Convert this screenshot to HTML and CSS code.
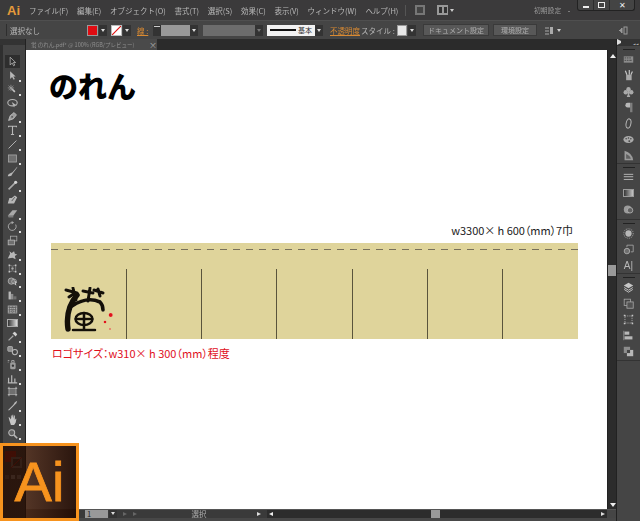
FILE: index.html
```html
<!DOCTYPE html>
<html lang="ja">
<head>
<meta charset="utf-8">
<title>Illustrator</title>
<link rel="stylesheet" href="styles.css">
</head>
<body>
<div class="app">
  <header class="menubar">
    <span class="ai-mark">Ai</span>
    <nav class="menu">
      <span>ファイル(F)</span><span>編集(E)</span><span>オブジェクト(O)</span><span>書式(T)</span><span>選択(S)</span><span>効果(C)</span><span>表示(V)</span><span>ウィンドウ(W)</span><span>ヘルプ(H)</span>
    </nav>
    <i class="vsep"></i>
    <span class="mini-box"><i></i></span>
    <span class="mini-grid"><i></i><i></i></span><i class="tri"></i>
    <span class="workspace">初期設定</span><i class="tri small"></i>
    <div class="winbtns">
      <span><i class="min"></i></span><span><i class="max"></i></span><span class="close">✕</span>
    </div>
  </header>

  <div class="control">
    <i class="grip"></i>
    <span class="label sel">選択なし</span>
    <span class="swatch red"></span><i class="dd"></i>
    <span class="swatch none"><svg viewBox="0 0 11 11"><path d="M0 11 11 0" stroke="#e01010" stroke-width="1.4"/></svg></span><i class="dd"></i>
    <span class="label orange stroke-l">線 :</span>
    <span class="stepper"></span><span class="combo c-weight"></span><i class="dd"></i>
    <span class="combo c-var"></span><i class="dd dim"></i>
    <span class="brush"><i></i><b>基本</b></span><i class="dd"></i>
    <span class="label orange opacity">不透明度</span>
    <span class="label style">スタイル :</span>
    <span class="swatch pale"></span><i class="dd"></i>
    <span class="btn b-doc">ドキュメント設定</span>
    <span class="btn b-env">環境設定</span>
    <svg class="arr-ico" viewBox="0 0 10 9"><path d="M1 2h4M1 5h4M1 8h4" stroke="#aaa"/><rect x="6" y="1" width="3" height="7" fill="#aaa"/></svg><i class="tri"></i>
    <svg class="end-ico" viewBox="0 0 9 9"><path d="M0 4.500h3M3 2v5l-2-2.500z" stroke="#999" fill="#999"/><rect x="5" y="1" width="3" height="7" fill="none" stroke="#999"/></svg>
  </div>

  <div class="workspace-area">
    <aside class="tools">
      <div class="grip-row"></div>
      <div class="toolgrid">
        <span class="tool on"><svg viewBox="0 0 14 14"><path d="M4 1.500v10l2.500-2.500 2 3.500 1.500-1-2-3.200h3z" fill="none" stroke="#ccc"/></svg></span>
        <span class="tool"><svg viewBox="0 0 14 14"><path d="M4 1.500v10l2.500-2.500 2 3.500 1.500-1-2-3.200h3z" fill="#ccc"/></svg></span>
        <span class="tool"><svg viewBox="0 0 14 14"><path d="M10 10 6 6" stroke="#ddd" stroke-width="2"/><path d="M5 1v8M1 5h8M2 2l6 6M8 2 2 8" stroke="#bbb" stroke-width=".8"/></svg></span>
        <span class="tool"><svg viewBox="0 0 14 14"><ellipse cx="7" cy="6" rx="6" ry="4" fill="none" stroke="#ccc" stroke-width="1.400"/><path d="M6 5l3 7 1-3 3 1z" fill="#ccc"/></svg></span>
        <span class="tool"><svg viewBox="0 0 14 14"><path d="M2 12 4 6l5-4 3 3-4 5z" fill="#aaa" stroke="#ddd"/><circle cx="6.500" cy="7.500" r="1" fill="#444"/></svg></span>
        <span class="tool"><svg viewBox="0 0 14 14"><path d="M2 3V1.500h10V3M7 1.500V12M5 12h4" fill="none" stroke="#ccc" stroke-width="1.400"/></svg></span>
        <span class="tool"><svg viewBox="0 0 14 14"><path d="M2 12 12 2" stroke="#ccc" stroke-width="1.200"/></svg></span>
        <span class="tool"><svg viewBox="0 0 14 14"><rect x="2" y="2.500" width="10" height="9" fill="#777" stroke="#bbb"/></svg></span>
        <span class="tool"><svg viewBox="0 0 14 14"><path d="M13 1 7 8 3 10q-2 1-2 3 5 1 6-3l6-8z" fill="#ccc"/></svg></span>
        <span class="tool"><svg viewBox="0 0 14 14"><path d="M2 12 10 4" stroke="#bbb" stroke-width="2"/><circle cx="11" cy="3" r="2" fill="#eee"/></svg></span>
        <span class="tool"><svg viewBox="0 0 14 14"><path d="M1 12h8l4-8-3-2-4 3H3z" fill="#ccc"/><path d="M6 9l4-5" stroke="#444"/></svg></span>
        <span class="tool"><svg viewBox="0 0 14 14"><path d="M1 10 7 3h6L8 10z" fill="#bbb"/><path d="M1 10h7v2H2z" fill="#888"/></svg></span>
        <span class="tool"><svg viewBox="0 0 14 14"><path d="M11 4.500A5 5 0 1 1 7 2" fill="none" stroke="#bbb" stroke-width="1.200"/><path d="M6 0v4l3-2z" fill="#bbb"/></svg></span>
        <span class="tool"><svg viewBox="0 0 14 14"><rect x="4.500" y="1.500" width="8" height="6" fill="none" stroke="#bbb"/><rect x="1.500" y="6.500" width="8" height="6" fill="#777" stroke="#ccc"/></svg></span>
        <span class="tool"><svg viewBox="0 0 14 14"><path d="M1 12 4 6 3 3l3 2 3-2 1 3 3 1-3 2 1 4-4-2z" fill="#ccc"/></svg></span>
        <span class="tool"><svg viewBox="0 0 14 14"><path d="M2 2h2v2H2zM10 2h2v2h-2zM2 10h2v2H2zM10 10h2v2h-2z" fill="#ddd"/><path d="M4 3q3 2 6 0M4 11q3-2 6 0M3 4v6M11 4v6" fill="none" stroke="#999"/><circle cx="7" cy="7" r="1.500" fill="#bbb"/></svg></span>
        <span class="tool"><svg viewBox="0 0 14 14"><circle cx="5.500" cy="6.500" r="4" fill="#777" stroke="#ccc"/><circle cx="9" cy="7" r="3" fill="none" stroke="#ccc"/><path d="M10 6l3 2-2 1 1 3-2-1z" fill="#ddd"/></svg></span>
        <span class="tool"><svg viewBox="0 0 14 14"><path d="M2 2h3v10H2z" fill="#ccc"/><path d="M5 5h3v7H5z" fill="#999"/><path d="M8 8h4v4H8z" fill="#777"/></svg></span>
        <span class="tool"><svg viewBox="0 0 14 14"><rect x="1.500" y="2.500" width="11" height="9" fill="#666" stroke="#bbb"/><path d="M1.500 6h11M1.500 9h11M5 2.500v9M9 2.500v9" stroke="#ddd" stroke-dasharray="1.500 1"/></svg></span>
        <span class="tool"><span class="gradient"></span></span>
        <span class="tool"><svg viewBox="0 0 14 14"><path d="M2 12 8 6" stroke="#bbb" stroke-width="1.500"/><path d="M7 3l4 4 2-3-3-3z" fill="#eee"/></svg></span>
        <span class="tool"><svg viewBox="0 0 14 14"><rect x="1" y="2" width="6" height="6" rx="1" fill="#999" stroke="#ccc"/><circle cx="10" cy="9" r="3.300" fill="none" stroke="#ccc" stroke-width="1.300"/></svg></span>
        <span class="tool"><svg viewBox="0 0 14 14"><rect x="4" y="4" width="7" height="9" rx="2" fill="#aaa"/><path d="M6 4V2h3v2" fill="none" stroke="#ccc"/><circle cx="7.500" cy="8.500" r="1.500" fill="#333"/><path d="M1 2h2M1 4h1" stroke="#ccc"/></svg></span>
        <span class="tool"><svg viewBox="0 0 14 14"><path d="M2 12V6M6 12V3M10 12V7M1 12.500h12" stroke="#ccc" stroke-width="1.500"/></svg></span>
        <span class="tool"><svg viewBox="0 0 14 14"><rect x="2.500" y="3" width="9" height="8" fill="#777" stroke="#bbb"/><path d="M1 3h2M11 3h2M1 11h2M11 11h2M2.500 1v2M11.500 1v2M2.500 11v2M11.500 11v2" stroke="#ddd"/></svg></span>
        <span class="tool"><svg viewBox="0 0 14 14"><path d="M1 13 8 6l2-3 3-2-1 3-2 2-7 7z" fill="#ccc"/></svg></span>
        <span class="tool"><svg viewBox="0 0 14 14"><path d="M3 8 2 4h1l2 3V2h1v4l1-5h1v5l1-4h1v6l1-2h1l-1 5-2 3H5z" fill="#ddd"/></svg></span>
        <span class="tool"><svg viewBox="0 0 14 14"><circle cx="6" cy="6" r="3.800" fill="#666" stroke="#ccc" stroke-width="1.300"/><path d="M9 9l4 4" stroke="#ccc" stroke-width="2"/></svg></span>
        <svg class="fillstroke" viewBox="0 0 20 30"><rect x="1" y="0" width="11" height="11" fill="#d8100c"/><rect x="7" y="6" width="11" height="11" fill="#888"/><rect x="9" y="8" width="7" height="7" fill="#333"/><path d="M7 17 18 6" stroke="#d8100c"/><rect x="1" y="24" width="4" height="4" fill="#777"/><rect x="7" y="24" width="4" height="4" fill="#bbb"/><rect x="13" y="24" width="4" height="4" fill="#999"/></svg>
      </div>
    </aside>

    <main class="doc">
      <div class="tabs">
        <span class="tab"><span class="tab-name">蛍 のれん.pdf* @ 100% (RGB/プレビュー)</span><span class="tab-x">×</span></span>
      </div>
      <div class="doc-body">
        <div class="canvas">
          <h1 class="title">のれん</h1>
          <p class="size">w3300× h 600（mm）7巾</p>
          <section class="noren">
            <div class="stitch"></div>
            <div class="panels">
              <div class="panel">
                <svg class="logo" viewBox="0 0 50 50">
                  <g fill="none" stroke="#141008" stroke-linecap="round">
                    <path d="M14 8Q2 22 5 42" stroke-width="5.500"/>
                    <path d="M9 19Q24 9 37 15q3 3 3 8" stroke-width="3.600"/>
                    <path d="M3 3l11 3M10 1l3 12M6 10l6-4M20 4l10 2M27 1l-2 13M31 3l9 3M35 2l2 7" stroke-width="3"/>
                    <ellipse cx="21" cy="32" rx="8.500" ry="6" stroke-width="2.600"/>
                    <path d="M13 32h16M21 26v17M10 43h22" stroke-width="2.600"/>
                  </g>
                  <circle cx="47.700" cy="28" r="2" fill="#e0141c"/>
                  <circle cx="42" cy="35" r="1.300" fill="#e0141c"/>
                  <circle cx="47" cy="42" r=".8" fill="#e0141c"/>
                </svg>
              </div>
              <div class="panel"></div><div class="panel"></div><div class="panel"></div><div class="panel"></div><div class="panel"></div><div class="panel"></div>
            </div>
          </section>
          <p class="logo-note">ロゴサイズ：w310× h 300（mm）程度</p>
        </div>
        <div class="vscroll">
          <i class="up"></i><i class="thumb"></i><i class="down"></i>
        </div>
      </div>
      <footer class="status">
        <span class="zoom">1</span><i class="dd"></i>
        <i class="play"></i><i class="play"></i>
        <span class="status-text">選択</span>
        <i class="play bright"></i>
        <div class="hscroll"><i class="left"></i><i class="hthumb"></i><i class="right"></i></div>
        <i class="corner"></i>
      </footer>
    </main>

    <aside class="dock">
      <div class="grip-row right">◂◂</div>
      <div class="dock-group g1">
        <span class="dock-i"><svg viewBox="0 0 14 14"><rect x="1" y="3" width="12" height="8" fill="#999"/><path d="M2 5h2M5 5h2M8 5h2M2 8h2M5 8h2M8 8h3" stroke="#333"/></svg></span>
        <span class="dock-i"><svg viewBox="0 0 14 14"><path d="M4 6h7v7H4z" fill="#bbb"/><path d="M5 6 3 1M8 6V0M10 6l2-4" stroke="#ddd" stroke-width="1.500"/></svg></span>
        <span class="dock-i"><svg viewBox="0 0 14 14"><circle cx="7" cy="4" r="2.800" fill="#bbb"/><circle cx="3.500" cy="8" r="2.800" fill="#bbb"/><circle cx="10.500" cy="8" r="2.800" fill="#bbb"/><path d="M7 6v6M5 13h4" stroke="#bbb" stroke-width="2"/></svg></span>
        <span class="dock-i"><svg viewBox="0 0 14 14"><path d="M9 1h3v12H9z" fill="#888"/><path d="M9 1H6a3 3 0 0 0 0 6h3z" fill="#ccc"/></svg></span>
        <span class="dock-i"><svg viewBox="0 0 14 14"><ellipse cx="7" cy="7" rx="3" ry="6" transform="rotate(12 7 7)" fill="none" stroke="#ccc" stroke-width="1.300"/></svg></span>
        <span class="dock-i"><svg viewBox="0 0 14 14"><ellipse cx="7" cy="7" rx="6.500" ry="4.500" fill="#bbb"/><circle cx="4" cy="6" r="1" fill="#444"/><circle cx="7" cy="5" r="1" fill="#444"/><circle cx="10" cy="6" r="1" fill="#444"/><circle cx="8" cy="9" r="1.200" fill="#444"/></svg></span>
        <span class="dock-i"><svg viewBox="0 0 14 14"><path d="M2 1v12h11Q12 4 2 1z" fill="#aaa"/><path d="M4 5v6h6Q9 7 4 5z" fill="#666"/></svg></span>
      </div>
      <div class="dock-group g2">
        <span class="dock-i"><svg viewBox="0 0 14 14"><path d="M1 3h12M1 6h12M1 9.500h12" stroke="#ccc" stroke-width="1.200"/></svg></span>
        <span class="dock-i"><span class="gradient"></span></span>
        <span class="dock-i"><svg viewBox="0 0 14 14"><circle cx="6" cy="7" r="5" fill="#aaa"/><circle cx="9" cy="8" r="3.500" fill="#666" stroke="#ccc"/></svg></span>
      </div>
      <div class="dock-group g3">
        <span class="dock-i"><svg viewBox="0 0 14 14"><circle cx="7" cy="7" r="4" fill="#ccc"/><circle cx="7" cy="7" r="6" fill="none" stroke="#999" stroke-dasharray="1.200 1.200" stroke-width="1.400"/></svg></span>
        <span class="dock-i"><svg viewBox="0 0 14 14"><path d="M5 4V1.500h8V10h-3" fill="none" stroke="#bbb"/><circle cx="5" cy="9" r="3.500" fill="#777" stroke="#ccc"/></svg></span>
        <span class="dock-i type-a">A|</span>
      </div>
      <div class="dock-group g4">
        <span class="dock-i"><svg viewBox="0 0 14 14"><path d="M7 1l6 3.500L7 8 1 4.500z" fill="#ddd"/><path d="M1.500 7 7 10.500 12.500 7M1.500 9.500 7 13l5.500-3.500" fill="none" stroke="#ddd" stroke-width="1.200"/></svg></span>
        <span class="dock-i"><svg viewBox="0 0 14 14"><rect x="1.500" y="1.500" width="8" height="8" fill="none" stroke="#bbb"/><rect x="5" y="5" width="8" height="8" fill="#555" stroke="#bbb"/></svg></span>
        <span class="dock-i"><svg viewBox="0 0 14 14"><rect x="2.500" y="2.500" width="9" height="9" fill="none" stroke="#ccc" stroke-dasharray="1.500 1.300"/><path d="M1 1h2v2H1zM11 1h2v2h-2zM1 11h2v2H1zM11 11h2v2h-2z" fill="#ddd"/></svg></span>
        <span class="dock-i"><svg viewBox="0 0 14 14"><path d="M1 1v12" stroke="#aaa"/><rect x="2" y="2" width="6" height="4" fill="#ccc"/><rect x="2" y="8" width="10" height="4" fill="#ccc"/></svg></span>
        <span class="dock-i"><svg viewBox="0 0 14 14"><rect x="1" y="1" width="8" height="8" fill="#999"/><rect x="5" y="5" width="8" height="8" fill="#ccc"/><rect x="5" y="5" width="4" height="4" fill="#444"/></svg></span>
      </div>
    </aside>
  </div>
</div>

<div class="badge"><span>Ai</span></div>
</body>
</html>
```

FILE: styles.css
```css
* { box-sizing: border-box; }
html, body { margin: 0; height: 100%; }
body {
  width: 640px;
  height: 521px;
  overflow: hidden;
  position: relative;
  background: #3a3a3a;
  font-family: "Noto Sans CJK JP", "Noto Sans", sans-serif;
  color: #b8b8b8;
  font-size: 7.5px;
}
i { display: block; font-style: normal; flex: none; }
svg { display: block; }

.app { display: flex; flex-direction: column; height: 521px; }

/* soft look of the downscaled chrome */
.menu, .workspace, .label, .btn, .tab-name, .status-text, .tool svg, .dock-i { filter: blur(.3px); }
.tool svg, .dock-i { opacity: .85; }

/* title/menu bar */
.menubar {
  height: 20px;
  flex: none;
  display: flex;
  align-items: center;
  background: #3b3a3b;
  padding-left: 7px;
}
.ai-mark { font: bold 13px "Liberation Sans", sans-serif; color: #e59a3a; width: 22px; }
.menu { display: flex; gap: 8.700px; white-space: nowrap; width: 376px; }
.vsep { width: 1px; height: 11px; background: #555; margin-right: 9px; }
.mini-box { width: 10px; height: 10px; background: #777; padding: 2px; margin-right: 12px; }
.mini-box i { width: 6px; height: 6px; background: #444; }
.mini-grid { width: 11px; height: 10px; background: #999; display: flex; gap: 2px; padding: 2px; margin-right: 2px; }
.mini-grid i { width: 3px; height: 6px; background: #333; }
.tri { width: 0; height: 0; border: 2.500px solid transparent; border-top: 3px solid #ccc; border-bottom: 0; }
.tri.small { border-width: 1.500px; border-top-color: #bbb; margin: 3px 0 0 6px; }
.workspace { margin-left: 80px; width: 28px; white-space: nowrap; color: #999; font-size: 6.800px; }
.winbtns {
  margin-left: 7px;
  align-self: flex-start;
  display: flex;
  height: 11px;
  width: 58px;
  background: #444;
  border: 1px solid #222;
  border-top: 0;
  border-radius: 0 0 3px 3px;
}
.winbtns span { flex: 1; display: flex; align-items: center; justify-content: center; border-right: 1px solid #2c2c2c; }
.winbtns .close { flex: 1.600; border: 0; color: #eee; font-size: 8px; line-height: 1; }
.min { width: 6px; height: 2px; background: #eee; margin-top: 3px; }
.max { width: 7px; height: 6px; border: 1.500px solid #eee; }

/* control bar */
.control {
  height: 19px;
  flex: none;
  display: flex;
  align-items: center;
  background: #454545;
  border-top: 1px solid #4f4f4f;
  padding-left: 6px;
}
.grip { width: 1px; height: 12px; background: #2e2e2e; margin-right: 3px; }
.label { white-space: nowrap; }
.sel { width: 77px; }
.swatch { width: 11px; height: 11px; margin-right: 1px; flex: none; border: 1px solid #999; }
.red { background: #e00c12; }
.none { background: #fff; margin-left: 4px; border-color: #bbb; }
.none svg { width: 9px; height: 9px; }
.pale { background: #e8e8e8; width: 10px; }
.dd {
  width: 8px;
  height: 11px;
  background: #333;
  position: relative;
  flex: none;
}
.dd::after {
  content: "";
  position: absolute;
  left: 2px;
  top: 4px;
  border: 2px solid transparent;
  border-top: 3px solid #ddd;
  border-bottom: 0;
}
.dd.dim::after { border-top-color: #777; }
.orange { color: #d98a32; text-decoration: underline; }
.stroke-l { margin-left: 6px; width: 16px; }
.stepper {
  width: 8px;
  height: 11px;
  background: linear-gradient(#ccc 0 1px, #333 1px);
  border: 1px solid #333;
}
.combo { height: 11px; flex: none; }
.c-weight { width: 29px; background: #999; }
.c-var { width: 52px; background: #6c6c6c; margin-left: 5px; }
.brush {
  width: 48px;
  height: 11px;
  background: #f2f2f2;
  margin-left: 4px;
  display: flex;
  align-items: center;
  padding-left: 3px;
  color: #333;
  flex: none;
}
.brush i { width: 26px; height: 1.500px; background: #111; margin-right: 2px; }
.brush b { font-weight: 400; font-size: 7px; }
.opacity { margin-left: 7px; width: 31px; }
.style { width: 36px; }
.btn {
  height: 12px;
  background: #585858;
  border: 1px solid #3a3a3a;
  display: flex;
  align-items: center;
  justify-content: center;
  white-space: nowrap;
  flex: none;
  color: #b0b0b0;
  font-size: 7px;
}
.b-doc { width: 66px; margin-left: 7px; }
.b-env { width: 44px; margin-left: 4px; }
.arr-ico { width: 10px; height: 9px; margin: 0 3px 0 7px; }
.end-ico { width: 9px; height: 9px; margin-left: 58px; }

/* work area */
.workspace-area { flex: 1; min-height: 0; display: flex; background: #2c2c2c; }
.tools { width: 26px; flex: none; background: #2f2f2f; border-right: 1px solid #222; display: flex; flex-direction: column; align-items: flex-end; }
.grip-row { height: 6px; flex: none; width: 100%; background: #333; }
.toolgrid {
  width: 22px;
  flex: 1;
  background: #454545;
  padding-top: 10px;
  display: grid;
  grid-auto-rows: 13.750px;
  align-content: start;
  justify-items: center;
  align-items: center;
}
.tool { width: 15px; height: 13px; display: flex; align-items: center; justify-content: center; position: relative; margin-right: 3px; }
.tool svg { width: 11px; height: 11px; }
.tool.on { background: #2e2e2e; }
.tool:not(.on):not(:nth-child(4)):not(:nth-child(9)):not(:nth-child(11)):not(:nth-child(14)):not(:nth-child(20)):not(:nth-child(25))::after {
  content: "";
  position: absolute;
  right: -1px;
  bottom: 0;
  width: 2px;
  height: 2px;
  background: #ddd;
}
.gradient { width: 11px; height: 8px; background: linear-gradient(90deg, #333, #ddd); border: 1px solid #aaa; display: block; }
.fillstroke { width: 20px; height: 30px; margin-top: 11px; align-self: start; }

.doc { flex: 1; min-width: 0; display: flex; flex-direction: column; }
.tabs { height: 11px; flex: none; background: #2b2b2b; }
.tab { display: flex; align-items: center; width: 131px; height: 11px; background: #4a4a4a; padding-left: 5px; color: #8f8f8f; font-size: 5.500px; white-space: nowrap; }
.tab-name { width: 121px; overflow: hidden; }
.tab-x { font-size: 8px; color: #aaa; line-height: 1; }
.doc-body { flex: 1; min-height: 0; display: flex; }

.canvas { width: 581px; flex: none; background: #fff; padding: 20px 0 0 25px; overflow: hidden; color: #111; }
.title { margin: 0 0 0 -2px; font-size: 29px; line-height: 30px; font-weight: 900; color: #000; }
.size { margin: 122px 0 0; width: 522px; text-align: right; font-size: 11px; line-height: 16px; color: #222; white-space: nowrap; font-feature-settings: "palt"; letter-spacing: -.05px; }
.noren { width: 527px; height: 96px; margin-top: 5px; background: #dfd49b; display: flex; flex-direction: column; }
.stitch { height: 1px; margin-top: 6px; background: repeating-linear-gradient(90deg, #77705a 0 7px, transparent 7px 13px); }
.panels { flex: 1; margin-top: 19px; padding-left: 1px; display: grid; grid-template-columns: repeat(7, 1fr); min-height: 0; }
.panel { border-right: 1px solid #5a543c; }
.panel:last-child { border: 0; }
.logo { width: 50px; height: 50px; margin: 18px 0 0 11px; filter: drop-shadow(0 0 .6px #fff8d8); }
.logo-note { margin: 6px 0 0 1px; font-size: 11px; line-height: 16px; color: #e0101c; white-space: nowrap; font-feature-settings: "palt"; }

.vscroll { flex: 1; background: #2c2c2c; display: flex; flex-direction: column; align-items: center; padding: 4px 0 2px; border-left: 1px solid #222; }
.up { border: 3.500px solid transparent; border-bottom: 4px solid #eee; border-top: 0; }
.thumb { width: 9px; height: 11px; background: #999; margin: 207px 0 auto; }
.down { border: 3.500px solid transparent; border-top: 4px solid #eee; border-bottom: 0; }

.status {
  height: 12px;
  flex: none;
  display: flex;
  align-items: flex-start;
  background: #3a3a3a;
  border-top: 1px solid #555;
  border-bottom: 3px solid #474747;
  padding-left: 59px;
}
.zoom { width: 24px; height: 8px; background: #999; color: #222; line-height: 8px; padding-left: 2px; }
.status .dd { height: 8px; margin-left: 1px; }
.status .dd::after { top: 2px; }
.play { width: 0; height: 0; border: 2.500px solid transparent; border-left: 4px solid #666; border-right: 0; margin: 2px 0 0 6px; }
.play.bright { border-left-color: #ddd; margin: 2px 6px 0 0; }
.status-text { width: 122px; margin-left: 4px; text-align: center; line-height: 8px; color: #aaa; }
.hscroll { width: 340px; height: 8px; background: #2c2c2c; display: flex; align-items: center; padding: 0 2px; flex: none; }
.left { border: 2.500px solid transparent; border-right: 4px solid #eee; border-left: 0; }
.hthumb { width: 9px; height: 8px; background: #999; margin: 0 auto 0 158px; }
.right { border: 2.500px solid transparent; border-left: 4px solid #ddd; border-right: 0; }
.corner { width: 9px; height: 8px; background: #454545; }

.dock { width: 24px; flex: none; background: #2f2f2f; border-left: 1px solid #222; display: flex; flex-direction: column; }
.grip-row.right { color: #aaa; font-size: 5px; line-height: 6px; text-align: right; padding-right: 1px; }
.dock-group { background: #454545; border-top: 1px solid #333; padding-top: 3px; display: flex; flex-direction: column; align-items: center; }
.dock-group::before { content: ""; width: 12px; height: 1px; background: #222; margin-bottom: 1px; }
.dock-i { width: 14px; height: 16px; display: flex; align-items: center; justify-content: center; }
.dock-i svg { width: 11px; height: 11px; }
.type-a { font: 10px "Liberation Sans", sans-serif; color: #ccc; }
.g2 { padding-bottom: 2px; }
.g4 { flex: 1; }
.g4 .dock-i:last-child { margin-bottom: 1px; }
.g4::after { content: ""; display: block; width: 100%; height: 1px; background: #333; }

/* splash badge over the toolbar corner */
.badge {
  position: absolute;
  left: 0;
  top: 443px;
  width: 79px;
  height: 78px;
  border: 3px solid #f7931e;
  background: linear-gradient(90deg, rgba(38,14,4,.86) 0 32%, rgba(72,40,24,.94) 32%, rgba(34,12,4,.96));
  display: flex;
  align-items: center;
  justify-content: center;
}
.badge span { font: 56px/1 "Liberation Sans", sans-serif; color: #f7931e; -webkit-text-stroke: .8px #f7931e; }
```
